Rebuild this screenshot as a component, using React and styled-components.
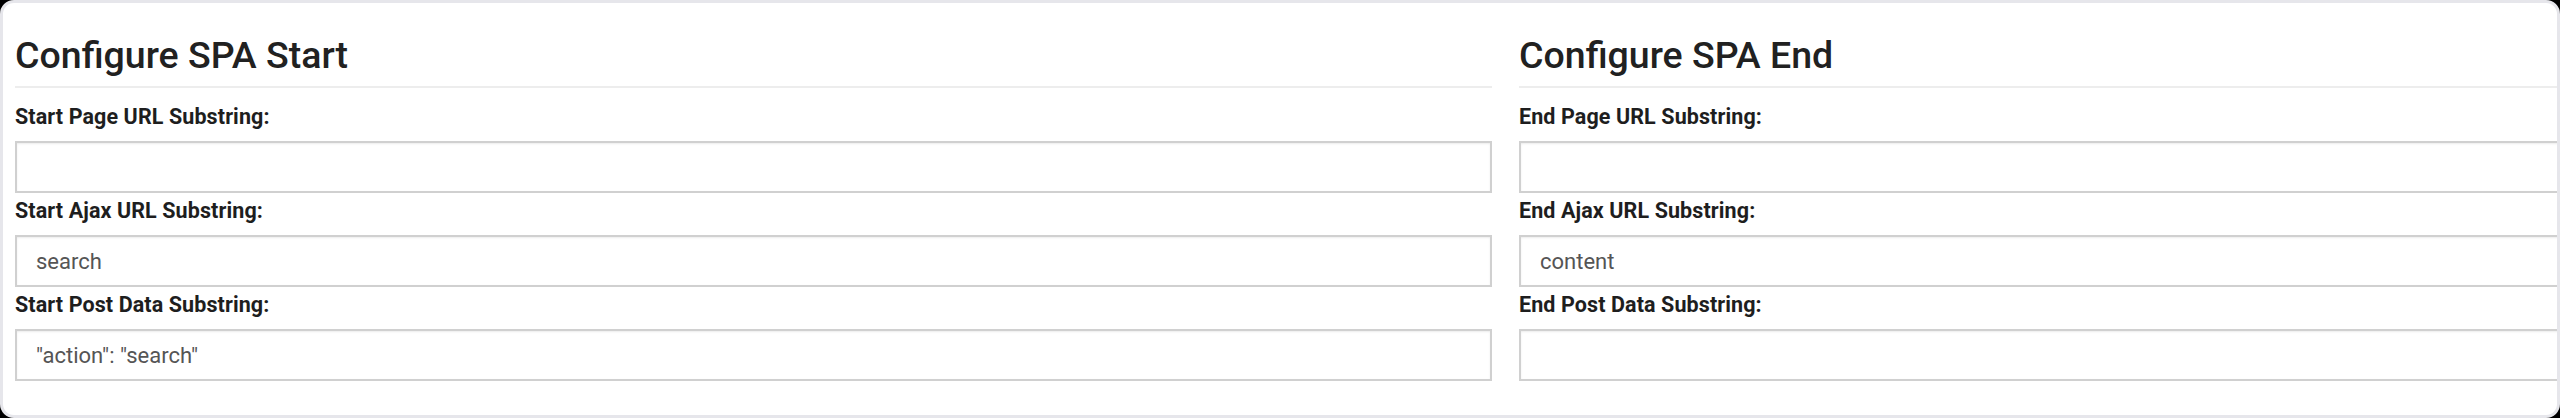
import React from "react";
import styled, { createGlobalStyle } from "styled-components";

const GlobalStyle = createGlobalStyle`
  html, body {
    margin: 0;
    padding: 0;
    background: #000;
  }
  body {
    font-family: Roboto, "Liberation Sans", sans-serif;
  }
`;

const Card = styled.div`
  box-sizing: border-box;
  width: 2560px;
  height: 418px;
  background: #fff;
  border: 3px solid #e6e6eb;
  border-radius: 14px;
  overflow: hidden;
  padding: 31px 0 0 12px;
`;

const Columns = styled.div`
  display: grid;
  grid-template-columns: 1477px 1477px;
  column-gap: 27px;
`;

const Section = styled.section`
  display: flex;
  flex-direction: column;
`;

const Title = styled.h2`
  margin: 0;
  padding-bottom: 9px;
  border-bottom: 2px solid #ededed;
  font-size: 37.5px;
  font-weight: 500;
  line-height: 43px;
  color: #212121;
`;

const Field = styled.div`
  display: flex;
  flex-direction: column;
  margin-top: 6px;

  &:first-of-type {
    margin-top: 17px;
  }
`;

const Label = styled.label`
  font-size: 21.5px;
  font-weight: 700;
  line-height: 24px;
  letter-spacing: 0.1px;
  color: #1e1e1e;
  margin-bottom: 12px;
`;

const Input = styled.input`
  box-sizing: border-box;
  width: 100%;
  height: 52px;
  margin: 0;
  padding: 0 19px;
  border: 2px solid #d0d0d0;
  border-radius: 0;
  box-shadow: inset 0 1px 2px rgba(0, 0, 0, 0.08);
  background: #fff;
  font-family: Roboto, "Liberation Sans", sans-serif;
  font-size: 22px;
  color: #555;
  outline: none;
`;

const sections = [
  {
    title: "Configure SPA Start",
    fields: [
      { label: "Start Page URL Substring:", value: "" },
      { label: "Start Ajax URL Substring:", value: "search" },
      { label: "Start Post Data Substring:", value: '"action": "search"' },
    ],
  },
  {
    title: "Configure SPA End",
    fields: [
      { label: "End Page URL Substring:", value: "" },
      { label: "End Ajax URL Substring:", value: "content" },
      { label: "End Post Data Substring:", value: "" },
    ],
  },
];

export default function App() {
  return (
    <>
      <GlobalStyle />
      <Card>
        <Columns>
          {sections.map((s) => (
            <Section key={s.title}>
              <Title>{s.title}</Title>
              {s.fields.map((f) => (
                <Field key={f.label}>
                  <Label>{f.label}</Label>
                  <Input type="text" defaultValue={f.value} />
                </Field>
              ))}
            </Section>
          ))}
        </Columns>
      </Card>
    </>
  );
}
